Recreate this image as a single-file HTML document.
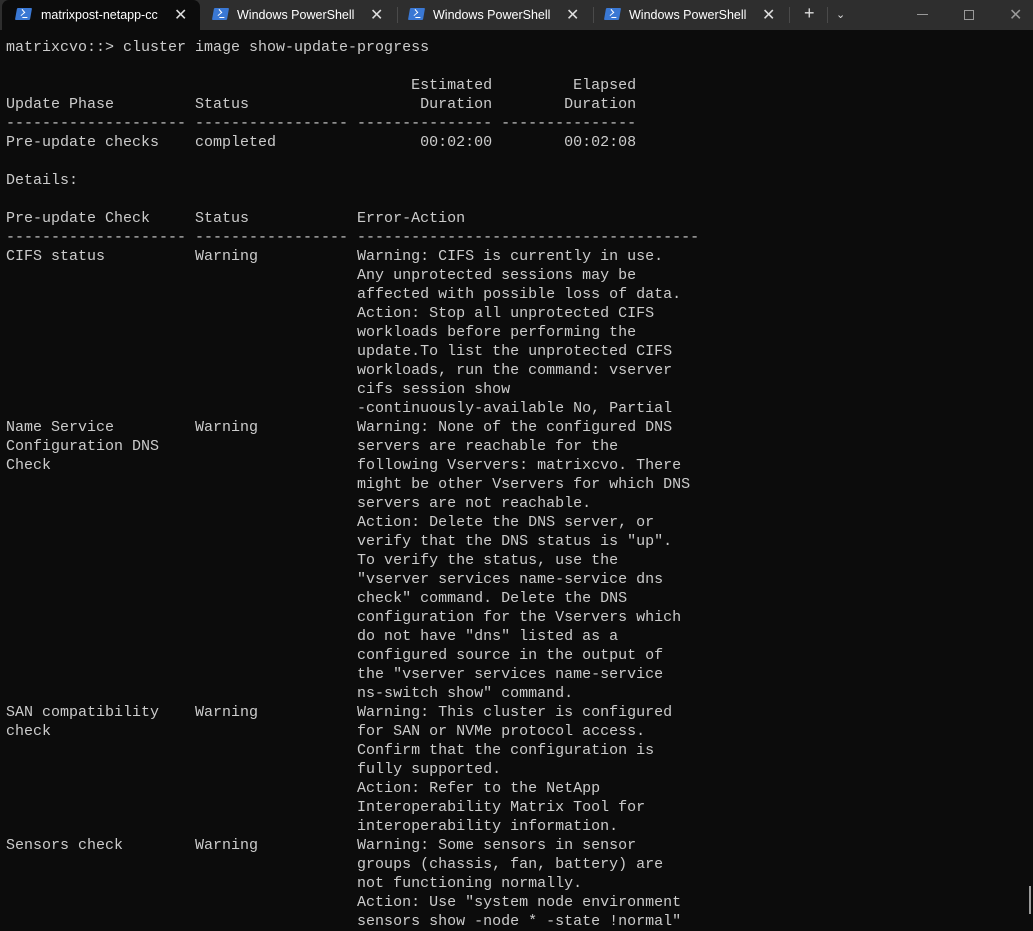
<!DOCTYPE html>
<html><head><meta charset="utf-8"><style>
html,body{margin:0;padding:0;width:1033px;height:931px;overflow:hidden;background:#0c0c0c;}
.bar{position:absolute;left:0;top:0;width:1033px;height:30px;background:#2e2e2e;font-family:"Liberation Sans",sans-serif;font-size:12.5px;color:#fff;}
.tab{position:absolute;top:0;height:30px;}
.active{left:2px;width:198px;background:#0c0c0c;border-radius:7px 7px 0 0;}
.ic{position:absolute;top:8px;width:15px;height:12px;background:#3a78d4;transform:skewX(-10deg);border-radius:1px;}
.ic::after{content:"";position:absolute;left:3px;top:2px;width:4px;height:4px;border-right:1.5px solid #fff;border-bottom:1.5px solid #fff;transform:rotate(-45deg);}
.ic::before{content:"";position:absolute;left:7px;top:9px;width:5px;height:1.3px;background:#fff;}
.lbl{position:absolute;top:8px;}
.x{position:absolute;top:5px;font-size:16px;color:#ddd;}
.sep{position:absolute;top:7px;width:1px;height:16px;background:#4a4a4a;}
pre{position:absolute;left:6px;top:38px;margin:0;font-family:"Liberation Mono",monospace;font-size:15px;line-height:19px;color:#cccccc;}
</style></head><body>
<div class="bar">
 <div class="tab active"></div>
 <div class="ic" style="left:16px"></div><div class="lbl" style="left:41px">matrixpost-netapp-cc</div><div class="x" style="left:174px">✕</div>
 <div class="ic" style="left:213px"></div><div class="lbl" style="left:237px">Windows PowerShell</div><div class="x" style="left:370px">✕</div>
 <div class="sep" style="left:397px"></div>
 <div class="ic" style="left:409px"></div><div class="lbl" style="left:433px">Windows PowerShell</div><div class="x" style="left:566px">✕</div>
 <div class="sep" style="left:593px"></div>
 <div class="ic" style="left:605px"></div><div class="lbl" style="left:629px">Windows PowerShell</div><div class="x" style="left:762px">✕</div>
 <div class="sep" style="left:789px"></div>
 <div class="x" style="left:804px;font-size:18px;top:3px">+</div>
 <div class="sep" style="left:827px"></div>
 <div class="x" style="left:836px;font-size:11px;top:8px">&#8964;</div>
 <div style="position:absolute;left:917px;top:14px;width:11px;height:1px;background:#999"></div>
 <div style="position:absolute;left:964px;top:10px;width:8px;height:8px;border:1px solid #999"></div>
 <div class="x" style="left:1009px;color:#999">✕</div>
</div>
<pre>matrixcvo::&gt; cluster image show-update-progress

                                             Estimated         Elapsed
Update Phase         Status                   Duration        Duration
-------------------- ----------------- --------------- ---------------
Pre-update checks    completed                00:02:00        00:02:08

Details:

Pre-update Check     Status            Error-Action
-------------------- ----------------- --------------------------------------
CIFS status          Warning           Warning: CIFS is currently in use.
                                       Any unprotected sessions may be
                                       affected with possible loss of data.
                                       Action: Stop all unprotected CIFS
                                       workloads before performing the
                                       update.To list the unprotected CIFS
                                       workloads, run the command: vserver
                                       cifs session show
                                       -continuously-available No, Partial
Name Service         Warning           Warning: None of the configured DNS
Configuration DNS                      servers are reachable for the
Check                                  following Vservers: matrixcvo. There
                                       might be other Vservers for which DNS
                                       servers are not reachable.
                                       Action: Delete the DNS server, or
                                       verify that the DNS status is "up".
                                       To verify the status, use the
                                       "vserver services name-service dns
                                       check" command. Delete the DNS
                                       configuration for the Vservers which
                                       do not have "dns" listed as a
                                       configured source in the output of
                                       the "vserver services name-service
                                       ns-switch show" command.
SAN compatibility    Warning           Warning: This cluster is configured
check                                  for SAN or NVMe protocol access.
                                       Confirm that the configuration is
                                       fully supported.
                                       Action: Refer to the NetApp
                                       Interoperability Matrix Tool for
                                       interoperability information.
Sensors check        Warning           Warning: Some sensors in sensor
                                       groups (chassis, fan, battery) are
                                       not functioning normally.
                                       Action: Use "system node environment
                                       sensors show -node * -state !normal"</pre>
<div style="position:absolute;left:1029px;top:886px;width:2px;height:28px;background:#9a9a9a"></div>
</body></html>
